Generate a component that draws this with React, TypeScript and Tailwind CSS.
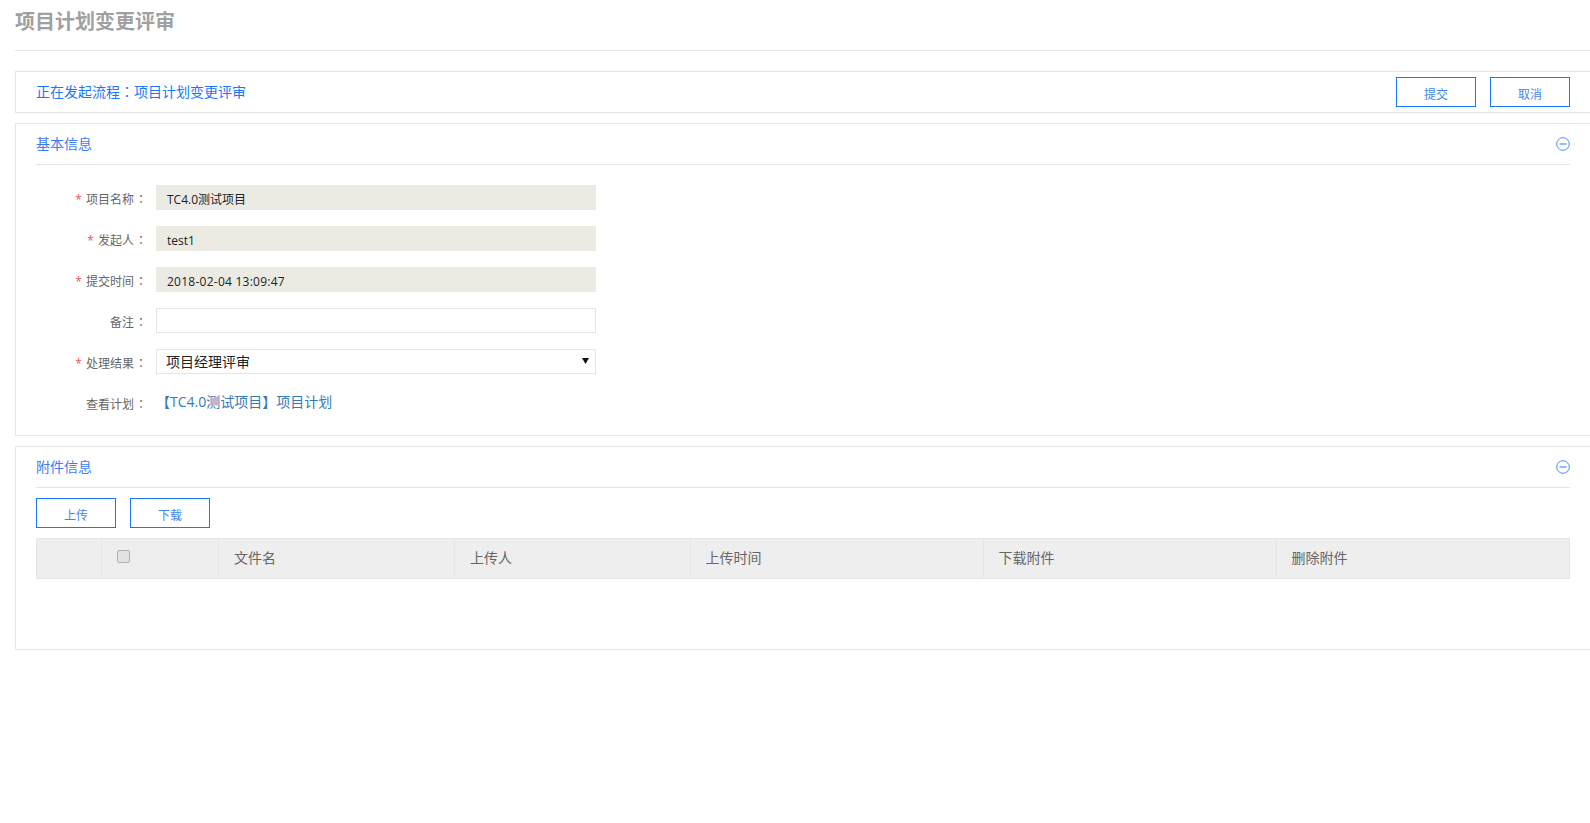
const FONT = "font-['Open_Sans','Noto_Sans_CJK_SC',sans-serif]";

// centred full-width colon, as the original font draws it
function Colon({ className = "" }: { className?: string }) {
  return <span className={`font-['Noto_Sans_CJK_TC',sans-serif] ${className}`}>：</span>;
}

function Button({ label }: { label: string }) {
  return (
    <button className="h-[30px] w-[80px] border border-[#1a75ff] bg-white pt-[5px] text-xs text-[#3f86f5]">
      {label}
    </button>
  );
}

function CollapseIcon() {
  return (
    <svg width="14" height="14" viewBox="0 0 14 14" fill="none" stroke="#4a8bf5" strokeWidth="1">
      <circle cx="7" cy="7" r="6.3" />
      <path d="M3.5 7h7" strokeWidth="1.2" />
    </svg>
  );
}

function SectionHeader({ title }: { title: string }) {
  return (
    <div className="flex h-[41px] items-center justify-between border-b border-[#e5e5e5] pb-[1px]">
      <span className="text-sm text-[#3b7cf5]">{title}</span>
      <CollapseIcon />
    </div>
  );
}

function FormRow({
  label,
  required,
  children,
}: {
  label: string;
  required?: boolean;
  children: React.ReactNode;
}) {
  return (
    <div className="flex h-[25px] items-center">
      <div className="w-[120px] pt-[4px] pr-[9px] text-right text-xs text-[#666666]">
        {required ? <span className="mr-[4px] text-[#e8584f]">*</span> : null}
        {label}
        <Colon className="ml-[1px]" />
      </div>
      {children}
    </div>
  );
}

function ReadOnlyField({ value, wide }: { value: string; wide?: boolean }) {
  return (
    <div
      className={`flex h-[25px] w-[440px] items-center bg-[#ebebe4] pl-[11px] pt-[5px] text-xs text-[#222222] ${
        wide ? "tracking-[0.25px]" : ""
      }`}
    >
      {value}
    </div>
  );
}

const columns = [
  { label: "", width: "w-[65px]" },
  { label: "checkbox", width: "w-[117px]" },
  { label: "文件名", width: "w-[236px]" },
  { label: "上传人", width: "w-[235.5px]" },
  { label: "上传时间", width: "w-[293px]" },
  { label: "下载附件", width: "w-[293px]" },
  { label: "删除附件", width: "flex-1" },
];

export default function App() {
  return (
    <div className={`${FONT} min-h-[823px] overflow-hidden bg-white pl-[15px]`}>
      <div className="flex h-[51px] items-start border-b border-[#e5e5e5] pt-[5px]">
        <h1 className="text-[20px] leading-[34px] font-bold text-[#a0a0a0]">项目计划变更评审</h1>
      </div>

      <div className="mt-[20px] flex h-[42px] items-center justify-between border border-r-0 border-[#e5e5e5] pl-[20px] pr-[20px]">
        <span className="pb-[2px] text-sm text-[#1a75ff]">
          正在发起流程
          <Colon />
          项目计划变更评审
        </span>
        <div className="flex gap-[14px]">
          <Button label="提交" />
          <Button label="取消" />
        </div>
      </div>

      <div className="mt-[10px] h-[313px] border border-r-0 border-[#e5e5e5] pl-[20px] pr-[20px]">
        <SectionHeader title="基本信息" />
        <div className="flex flex-col gap-[16px] pt-[20px]">
          <FormRow label="项目名称" required>
            <ReadOnlyField value="TC4.0测试项目" />
          </FormRow>
          <FormRow label="发起人" required>
            <ReadOnlyField value="test1" />
          </FormRow>
          <FormRow label="提交时间" required>
            <ReadOnlyField value="2018-02-04 13:09:47" wide />
          </FormRow>
          <FormRow label="备注">
            <input className="h-[25px] w-[440px] border border-[#e5e5e5] bg-white outline-none" />
          </FormRow>
          <FormRow label="处理结果" required>
            <div className="relative h-[25px] w-[440px] border border-[#e5e5e5] pl-[9px] text-sm leading-[23px] text-[#222222]">
              项目经理评审
              <svg className="absolute right-[6px] top-[8px]" width="7" height="6" viewBox="0 0 7 6">
                <path d="M0 0h7L3.5 6z" fill="#111111" />
              </svg>
            </div>
          </FormRow>
          <FormRow label="查看计划">
            <a className="mb-[2px] text-sm text-[#337ab7]">【TC4.0测试项目】项目计划</a>
          </FormRow>
        </div>
      </div>

      <div className="mt-[10px] h-[204px] border border-r-0 border-[#e5e5e5] pl-[20px] pr-[20px]">
        <SectionHeader title="附件信息" />
        <div className="mt-[10px] flex gap-[14px]">
          <Button label="上传" />
          <Button label="下载" />
        </div>
        <div className="mt-[10px] flex h-[41px] border border-[#e5e5e5] bg-[#eeeeee]">
          {columns.map((col, i) => (
            <div
              key={i}
              className={`${col.width} flex items-center border-r border-[#e5e5e5] pb-[2px] pl-[15px] text-sm text-[#666666] last:border-r-0`}
            >
              {col.label === "checkbox" ? (
                <input
                  type="checkbox"
                  disabled
                  className="mb-[3px] size-[13px] appearance-none rounded-[2px] border border-[#b0b0b0] bg-[#e2e2e2]"
                />
              ) : (
                col.label
              )}
            </div>
          ))}
        </div>
      </div>
    </div>
  );
}
